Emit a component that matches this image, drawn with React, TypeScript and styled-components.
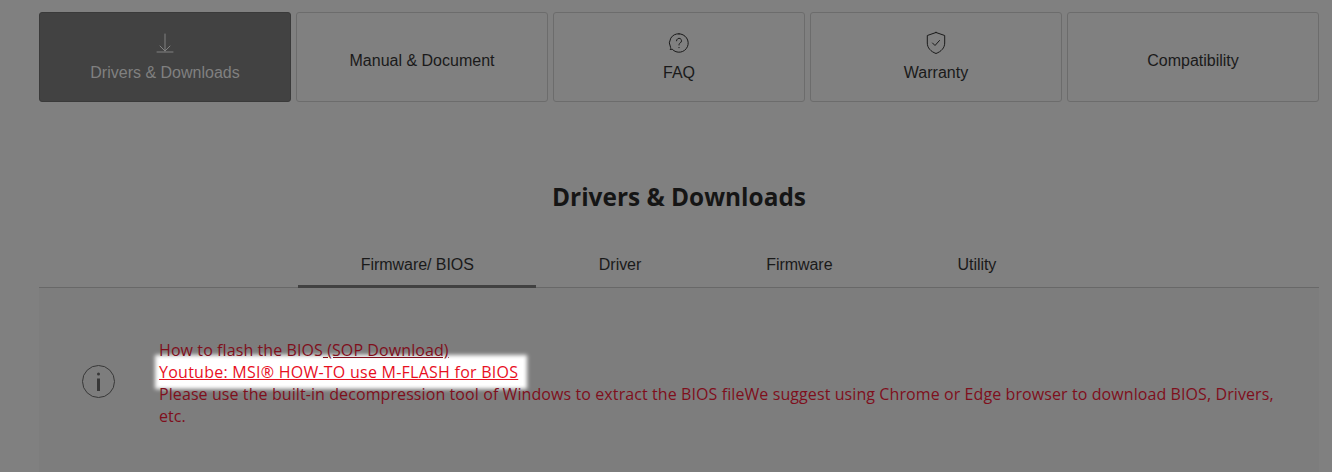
import React from "react";
import styled, { createGlobalStyle } from "styled-components";

const Global = createGlobalStyle`
  html, body { margin: 0; padding: 0; background: #808080; }
  body { width: 1332px; height: 472px; overflow: hidden; font-family: "Liberation Sans", Arial, sans-serif; }
`;

const Page = styled.div`
  box-sizing: border-box;
  width: 1332px;
  height: 472px;
  padding: 12px 13px 0 39px;
  display: flex;
  flex-direction: column;
  overflow: hidden;
`;

const TabCards = styled.nav`
  display: flex;
  gap: 5px;
`;

const Card = styled.a<{ $active?: boolean; $plain?: boolean }>`
  box-sizing: border-box;
  width: 252px;
  height: 90px;
  padding-top: ${(p) => (p.$plain ? "8px" : "0")};
  border: 1px solid ${(p) => (p.$active ? "#3a3a3a" : "#6c6c6c")};
  border-radius: 3px;
  background: ${(p) => (p.$active ? "#424242" : "transparent")};
  color: ${(p) => (p.$active ? "#808080" : "#1a1a1a")};
  font-size: 16px;
  line-height: 20px;
  display: flex;
  flex-direction: column;
  align-items: center;
  justify-content: center;
  gap: 8px;
`;

const IconSlot = styled.span`
  display: block;
  width: 24px;
  height: 24px;
  margin-top: -1px;
`;

const Heading = styled.h2`
  margin: 80px 0 0;
  font-size: 24.4px;
  line-height: 30px;
  font-weight: 700;
  color: #151515;
  text-align: center;
  font-family: "Open Sans", "Noto Sans", sans-serif;
`;

const SubTabs = styled.div`
  margin-top: 31px;
  height: 45px;
  box-sizing: border-box;
  padding-right: 1px;
  border-bottom: 1px solid #686868;
  display: flex;
  justify-content: center;
`;

const SubTab = styled.a<{ $active?: boolean }>`
  box-sizing: border-box;
  height: 45px;
  padding: 0 62.5px;
  font-size: 16px;
  letter-spacing: -0.05px;
  line-height: 44px;
  color: #1a1a1a;
  border-bottom: 3px solid ${(p) => (p.$active ? "#414141" : "transparent")};
`;

const Notice = styled.section`
  height: 179px;
  background: #7d7d7d;
  display: flex;
  align-items: flex-start;
  padding: 51px 40px 0 42px;
`;

const InfoIcon = styled.span`
  flex: none;
  display: block;
  width: 36px;
  height: 36px;
  margin-top: 25px;
  margin-right: 42px;
`;

const NoticeText = styled.div`
  font-family: "Open Sans", "Noto Sans", sans-serif;
  font-size: 16px;
  line-height: 22px;
  letter-spacing: 0.09px;
  color: #7f0f1c;
`;

const TextLine = styled.div`
  position: relative;
  z-index: 1;
`;

const DimLink = styled.a`
  text-decoration: underline;
  color: #7f0f1c;
`;

const Highlight = styled.a`
  background: #fff;
  box-shadow: 0 0 4px 4px #fff;
  padding: 2px 5px 2px 0;
  color: #e8101f;
  letter-spacing: 0.25px;
  text-decoration: underline;
`;

const stroke = { fill: "none", stroke: "currentColor", strokeLinecap: "round" as const, strokeLinejoin: "round" as const };

export default function App() {
  return (
    <Page>
      <Global />
      <TabCards>
        <Card $active>
          <IconSlot>
            <svg width="24" height="24" viewBox="0 0 24 24" {...stroke} strokeWidth="1">
              <path d="M12 3V20M7 15l5 5 5-5M4 21h16" />
            </svg>
          </IconSlot>
          Drivers &amp; Downloads
        </Card>
        <Card $plain>Manual &amp; Document</Card>
        <Card>
          <IconSlot>
            <svg width="24" height="24" viewBox="0 0 24 24" {...stroke} strokeWidth="1">
              <path d="M12 2.800a9.200 9.200 0 1 1-6.800 15.400c-.7.300-1.400.4-2 .3.600-.6.800-1.300.4-2A9.200 9.200 0 0 1 12 2.800Z" />
              <path d="M9.500 9.800a2.500 2.500 0 1 1 3.800 2.100c-.9.500-1.300 1.100-1.300 2.100M12 16.400v.3" />
            </svg>
          </IconSlot>
          FAQ
        </Card>
        <Card>
          <IconSlot>
            <svg width="24" height="24" viewBox="0 0 24 24" {...stroke} strokeWidth="1">
              <path d="M12 1.500 20.700 4.500V12c0 4.800-3.400 8.500-8.700 10.500C6.700 20.500 3.300 16.800 3.300 12V4.500L12 1.500Z" />
              <path d="M8.500 12l2.500 2.500 4.500-5" />
            </svg>
          </IconSlot>
          Warranty
        </Card>
        <Card $plain>Compatibility</Card>
      </TabCards>
      <Heading>Drivers &amp; Downloads</Heading>
      <SubTabs>
        <SubTab $active>Firmware/ BIOS</SubTab>
        <SubTab>Driver</SubTab>
        <SubTab>Firmware</SubTab>
        <SubTab>Utility</SubTab>
      </SubTabs>
      <Notice>
        <InfoIcon>
          <svg width="36" height="36" viewBox="0 0 36 36" fill="none" stroke="#383838">
            <circle cx="17.500" cy="17.500" r="16" strokeWidth="1" />
            <path d="M17.500 14.500V27" strokeWidth="3" />
            <circle cx="17.500" cy="10" r="1.500" fill="#383838" stroke="none" />
          </svg>
        </InfoIcon>
        <NoticeText>
          <TextLine>
            How to flash the BIOS<DimLink> (SOP Download)</DimLink>
          </TextLine>
          <div>
            <Highlight>Youtube: MSI® HOW-TO use M-FLASH for BIOS</Highlight>
          </div>
          <TextLine>
            Please use the built-in decompression tool of Windows to extract the BIOS fileWe suggest using Chrome or Edge browser to download BIOS, Drivers, etc.
          </TextLine>
        </NoticeText>
      </Notice>
    </Page>
  );
}
